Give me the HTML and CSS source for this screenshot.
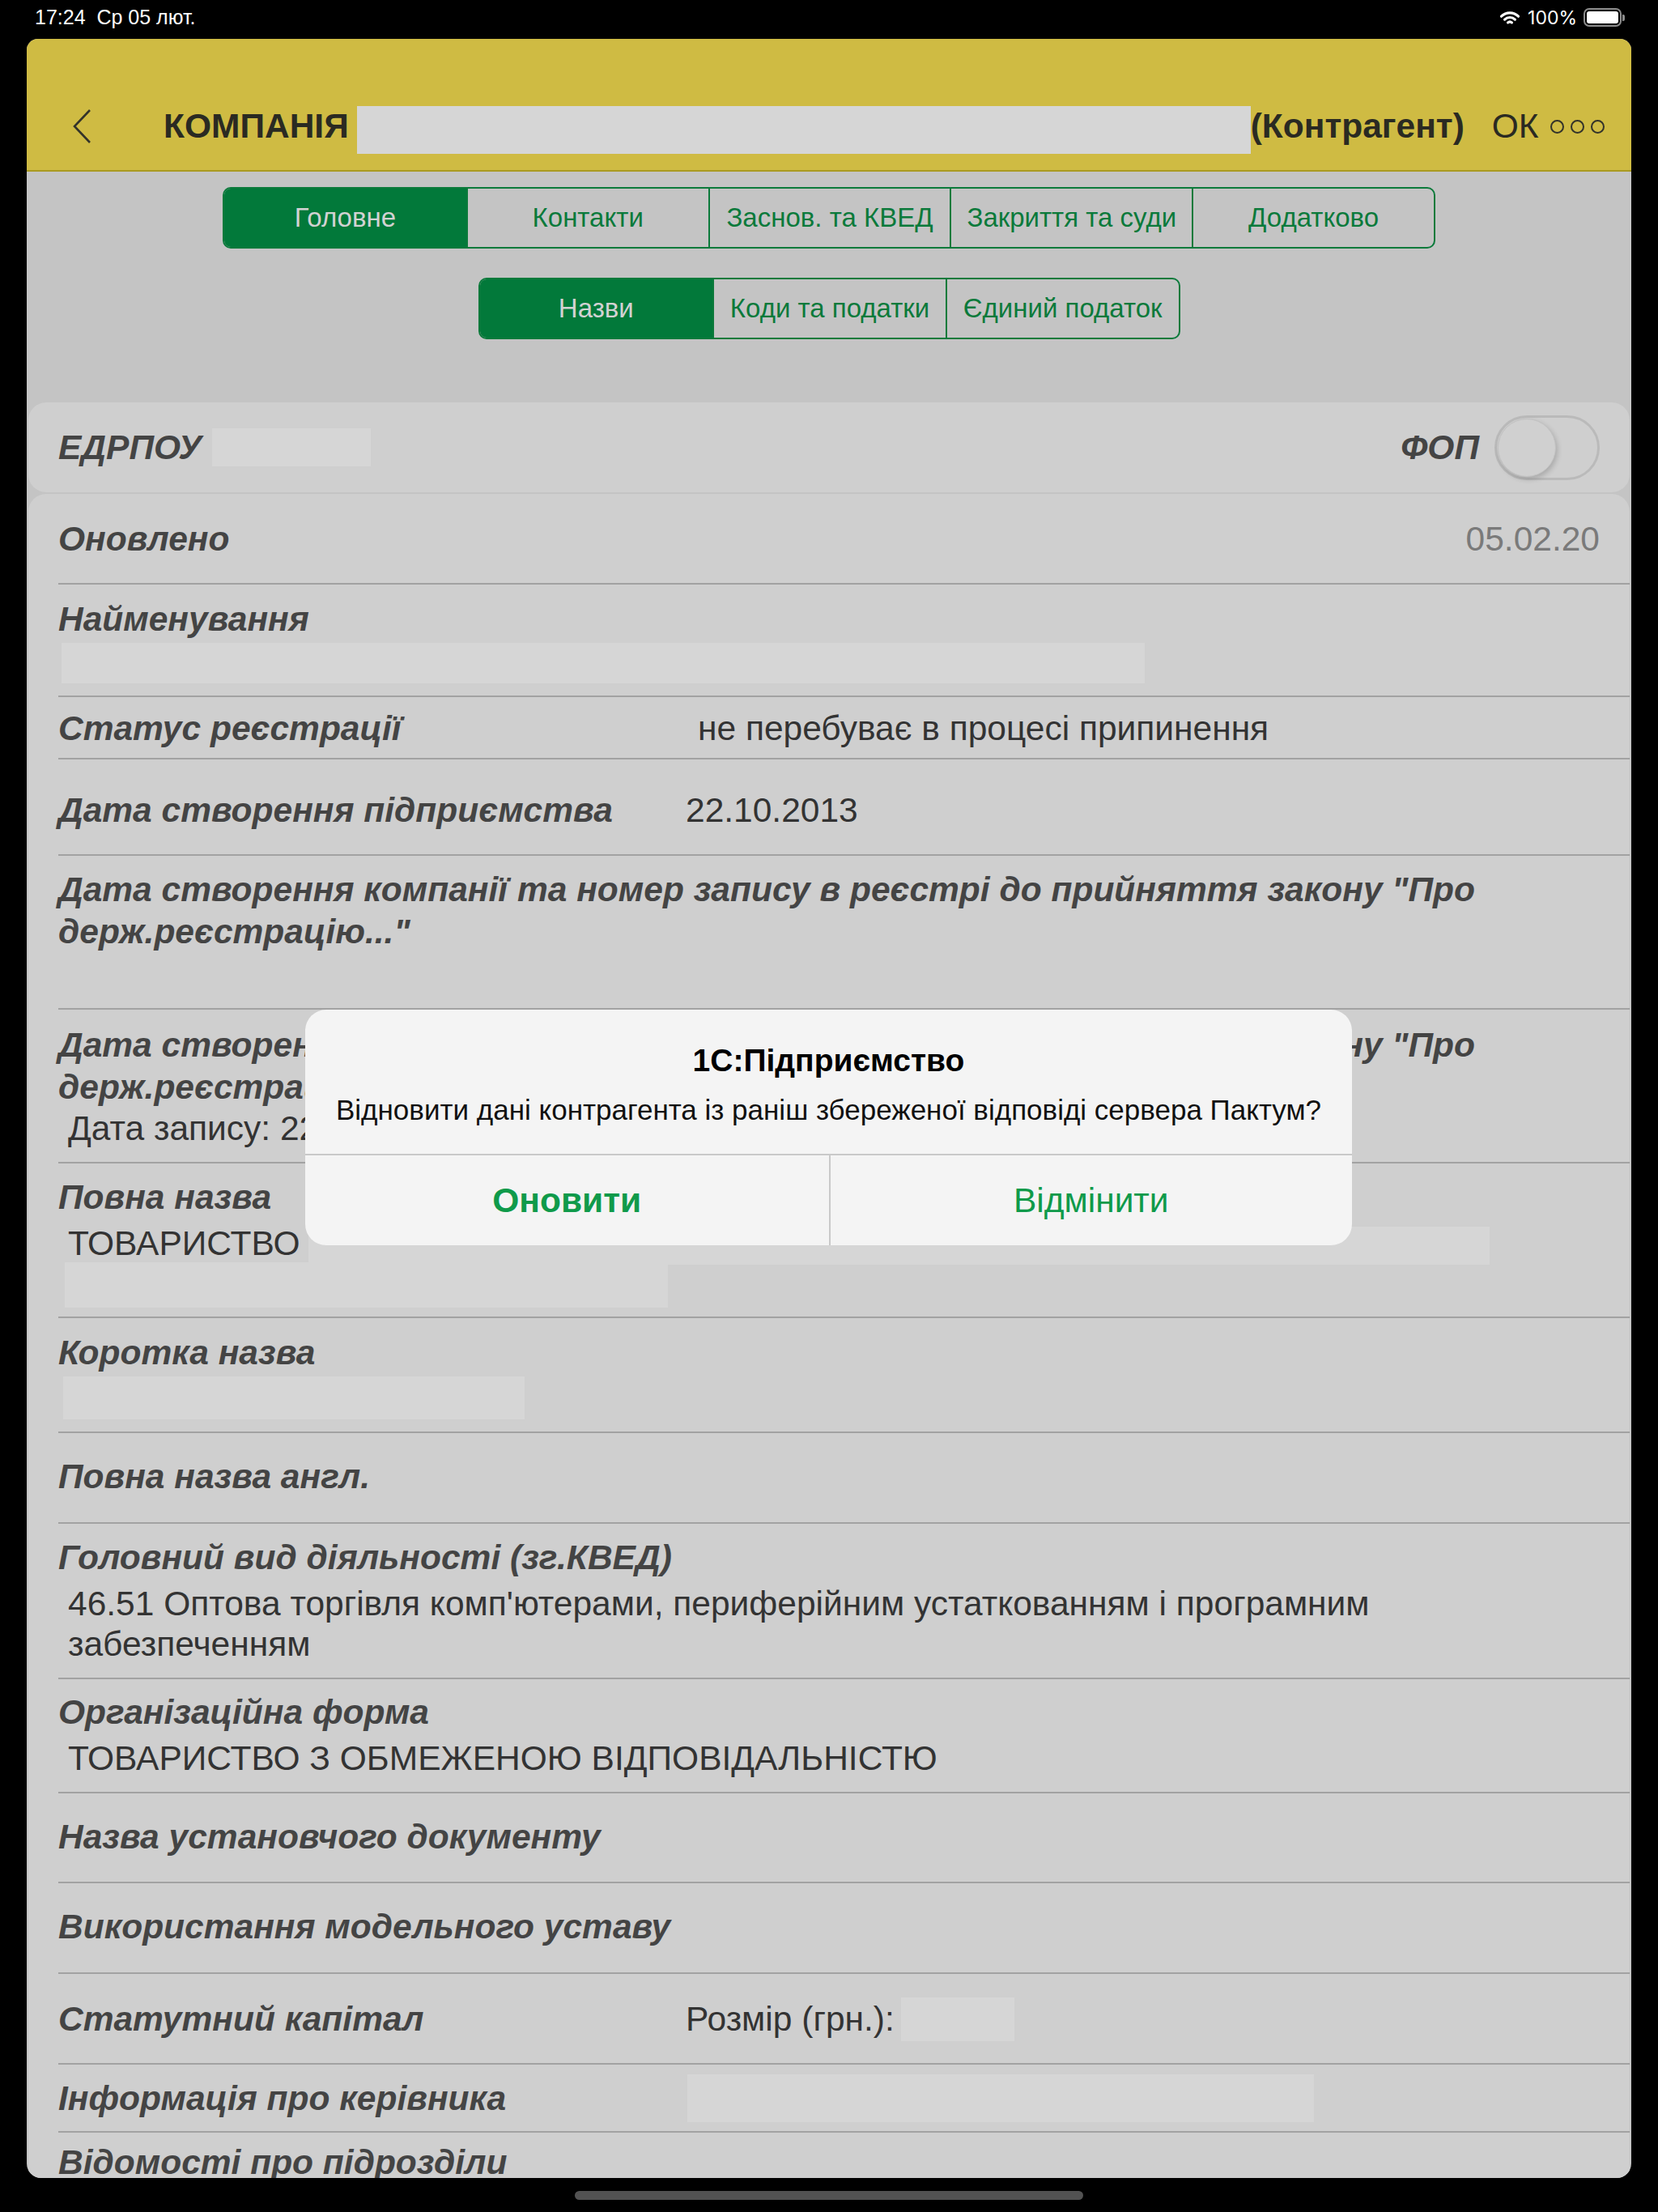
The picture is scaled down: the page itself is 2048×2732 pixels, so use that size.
FILE: index.html
```html
<!DOCTYPE html>
<html lang="uk">
<head>
  <meta charset="utf-8">
  <title>Компанія (Контрагент)</title>
  <link rel="stylesheet" href="styles.css">
</head>
<body>
  <div class="statusbar">
    <span class="clock">17:24&nbsp;&nbsp;Ср 05 лют.</span>
    <span class="sys">
      <svg class="wifi" viewBox="0 0 26 20">
        <path d="M2.5 8.2a15 15 0 0 1 21 0"/>
        <path d="M6.6 12.1a9.2 9.2 0 0 1 12.8 0"/>
        <path d="M10.6 15.9a3.6 3.6 0 0 1 4.8 0"/>
      </svg>
      <span>100%</span>
      <span class="battery"><span class="level"></span></span>
    </span>
  </div>

  <div class="sheet">
    <header class="navbar">
      <svg class="back" viewBox="0 0 24 44"><polyline points="22,2 3,22 22,42"/></svg>
      <h1 class="title">КОМПАНІЯ <span class="redact title-name"></span>(Контрагент)</h1>
      <span class="ok">ОК</span>
      <span class="more"><i></i><i></i><i></i></span>
    </header>

    <nav class="tabs">
      <div class="segments main">
        <span class="seg active">Головне</span>
        <span class="seg">Контакти</span>
        <span class="seg">Заснов. та КВЕД</span>
        <span class="seg">Закриття та суди</span>
        <span class="seg">Додатково</span>
      </div>
      <div class="segments sub">
        <span class="seg active">Назви</span>
        <span class="seg">Коди та податки</span>
        <span class="seg">Єдиний податок</span>
      </div>
    </nav>

    <section class="group head">
      <span class="lbl">ЕДРПОУ</span>
      <span class="redact code"></span>
      <span class="lbl fop">ФОП</span>
      <span class="switch"><span class="knob"></span></span>
    </section>

    <section class="group fields">
      <div class="row split r1">
        <span class="lbl">Оновлено</span>
        <span class="muted">05.02.20</span>
      </div>
      <div class="row r2">
        <div class="lbl">Найменування</div>
        <span class="redact name"></span>
      </div>
      <div class="row pair r3">
        <span class="lbl">Статус реєстрації</span>
        <span class="val status">не перебуває в процесі припинення</span>
      </div>
      <div class="row pair r4">
        <span class="lbl">Дата створення підприємства</span>
        <span class="val">22.10.2013</span>
      </div>
      <div class="row r5">
        <div class="lbl">Дата створення компанії та номер запису в реєстрі до прийняття закону "Про<br>держ.реєстрацію..."</div>
      </div>
      <div class="row r6">
        <div class="lbl">Дата створення компанії та номер запису в реєстрі до прийняття закону "Про<br>держ.реєстрацію..."</div>
        <div class="val block tight">Дата запису: 22.10.2013</div>
      </div>
      <div class="row r7">
        <div class="lbl">Повна назва</div>
        <div class="val block line">ТОВАРИСТВО<span class="redact full-a"></span></div>
        <span class="redact full-b"></span>
      </div>
      <div class="row r8">
        <div class="lbl">Коротка назва</div>
        <span class="redact short"></span>
      </div>
      <div class="row r9">
        <div class="lbl">Повна назва англ.</div>
      </div>
      <div class="row r10">
        <div class="lbl">Головний вид діяльності (зг.КВЕД)</div>
        <div class="val block">46.51 Оптова торгівля комп'ютерами, периферійним устаткованням і програмним<br>забезпеченням</div>
      </div>
      <div class="row r11">
        <div class="lbl">Організаційна форма</div>
        <div class="val block">ТОВАРИСТВО З ОБМЕЖЕНОЮ ВІДПОВІДАЛЬНІСТЮ</div>
      </div>
      <div class="row r12">
        <div class="lbl">Назва установчого документу</div>
      </div>
      <div class="row r13">
        <div class="lbl">Використання модельного уставу</div>
      </div>
      <div class="row pair r14">
        <span class="lbl">Статутний капітал</span>
        <span class="val">Розмір (грн.):</span>
        <span class="redact capital"></span>
      </div>
      <div class="row pair r15">
        <span class="lbl">Інформація про керівника</span>
        <span class="redact head-name"></span>
      </div>
      <div class="row r16">
        <div class="lbl">Відомості про підрозділи</div>
      </div>
    </section>
  </div>

  <div class="home-bar"></div>

  <div class="alert" role="alertdialog">
    <div class="alert-body">
      <h2>1С:Підприємство</h2>
      <p>Відновити дані контрагента із раніш збереженої відповіді сервера Пактум?</p>
    </div>
    <div class="alert-actions">
      <button class="primary" type="button">Оновити</button>
      <button type="button">Відмінити</button>
    </div>
  </div>
</body>
</html>
```

FILE: styles.css
```css
* {
  box-sizing: border-box;
}

body {
  margin: 0;
  width: 2048px;
  height: 2732px;
  position: relative;
  overflow: hidden;
  background: #000;
  font-family: "Liberation Sans", Arial, sans-serif;
}

/* top system bar */
.statusbar {
  height: 48px;
  display: flex;
  align-items: center;
  justify-content: space-between;
  padding: 0 45px 5px 43px;
  color: #fff;
  font-family: Inter, "Liberation Sans", sans-serif;
  font-size: 23px;
}

.clock {
  font-family: "Liberation Sans", sans-serif;
  font-size: 25px;
}

.sys {
  display: flex;
  align-items: center;
  gap: 9px;
}

.wifi {
  width: 26px;
  height: 20px;
  fill: none;
  stroke: #fff;
  stroke-width: 3.2;
  stroke-linecap: round;
}

.battery {
  position: relative;
  width: 47px;
  height: 23px;
  margin-left: -1px;
  border: 2px solid #8c8c8c;
  border-radius: 7px;
  padding: 2px;
}

.battery::after {
  content: "";
  position: absolute;
  right: -6px;
  top: 6px;
  width: 3px;
  height: 8px;
  border-radius: 0 2px 2px 0;
  background: #8c8c8c;
}

.battery .level {
  display: block;
  height: 100%;
  background: #fff;
  border-radius: 3px;
}

/* form sheet */
.sheet {
  margin: 0 33px;
  height: 2642px;
  background: #c4c4c4;
  border-radius: 14px 14px 18px 18px;
  overflow: hidden;
}

.navbar {
  height: 164px;
  display: flex;
  align-items: center;
  padding: 54px 31px 0 56px;
  background: #cfbb43;
  border-bottom: 2px solid #a99a22;
  color: #2a2a22;
  font-size: 42.5px;
}

.back {
  width: 24px;
  height: 44px;
  fill: none;
  stroke: #33332a;
  stroke-width: 2.6;
}

.title {
  margin: 0 0 0 89px;
  display: flex;
  align-items: center;
  font-size: 42.5px;
  font-weight: bold;
  white-space: nowrap;
}

.redact {
  display: block;
  background: #d6d6d6;
}

.title-name {
  width: 1104px;
  height: 59px;
  margin: 8px 0 0 10px;
}

.ok {
  margin-left: 34px;
}

.more {
  display: flex;
  gap: 8px;
  margin-left: 14px;
}

.more i {
  width: 17px;
  height: 17px;
  border: 2.5px solid #33332a;
  border-radius: 50%;
}

/* segmented tabs */
.tabs {
  display: flex;
  flex-direction: column;
  align-items: center;
  gap: 36px;
  padding: 19px 0 78px;
}

.segments {
  display: grid;
  grid-auto-flow: column;
  grid-auto-columns: 1fr;
  height: 76px;
  border: 2px solid #0b7a3b;
  border-radius: 10px;
  overflow: hidden;
  font-size: 33px;
  color: #0b7a3b;
}

.segments.main {
  width: 1498px;
}

.segments.sub {
  width: 867px;
}

.seg {
  display: flex;
  align-items: center;
  justify-content: center;
  white-space: nowrap;
  border-left: 2px solid #0b7a3b;
}

.seg:first-child {
  border-left: 0;
}

.seg.active {
  background: #02793a;
  color: #d2d2d2;
}

/* grouped form */
.group {
  margin: 0 2px;
  background: #cfcfcf;
  border-radius: 22px;
}

.group.head {
  height: 111px;
  margin-bottom: 2px;
  display: flex;
  align-items: center;
  padding: 0 37px;
}

.group.fields {
  border-radius: 22px 22px 0 0;
}

.lbl {
  font-size: 42.5px;
  line-height: 52px;
  font-weight: bold;
  font-style: italic;
  color: #444;
}

.code {
  width: 196px;
  height: 47px;
  margin-left: 13px;
}

.fop {
  margin-left: auto;
}

.switch {
  width: 130px;
  height: 80px;
  margin-left: 19px;
  border: 3px solid #bababa;
  border-radius: 40px;
  padding: 1px;
}

.knob {
  display: block;
  width: 72px;
  height: 72px;
  border-radius: 50%;
  background: #d0d0d0;
  border: 1px solid #c2c2c2;
  box-shadow: 2px 3px 6px rgba(0, 0, 0, 0.18);
}

.row {
  margin-left: 37px;
  padding-right: 37px;
  border-bottom: 2px solid #a2a2a2;
}

.row.split {
  display: flex;
  justify-content: space-between;
  align-items: center;
}

.row.pair {
  display: flex;
  align-items: center;
}

.row.pair > .lbl {
  width: 775px;
  flex: none;
}

.val {
  font-size: 42.5px;
  line-height: 52px;
  color: #333;
}

.val.status {
  margin-left: 15px;
}

.val.block {
  margin: 6px 0 0 12px;
  line-height: 50px;
}

.val.block.tight {
  margin-top: 0;
}

.val.line {
  display: flex;
  align-items: flex-end;
}

.muted {
  font-size: 42.5px;
  line-height: 52px;
  color: #7a7a7a;
}

.name {
  width: 1338px;
  height: 50px;
  margin: 3px 0 0 4px;
}

.full-a {
  width: 1459px;
  height: 47px;
  margin: 0 0 -1px 10px;
}

.full-b {
  width: 745px;
  height: 56px;
  margin: -2px 0 0 8px;
}

.short {
  width: 570px;
  height: 53px;
  margin: 3px 0 0 6px;
}

.capital {
  width: 140px;
  height: 54px;
  margin-left: 8px;
}

.head-name {
  width: 774px;
  height: 59px;
  margin-left: 2px;
}

.r1 { padding-top: 30px; padding-bottom: 28px; }
.r2 { padding-top: 17px; padding-bottom: 15px; }
.r3 { padding-top: 13px; padding-bottom: 10px; }
.r4 { padding-top: 37px; padding-bottom: 28px; }
.r5 { padding-top: 16px; padding-bottom: 68px; }
.r6 { padding-top: 18px; padding-bottom: 16px; }
.r7 { padding-top: 16px; padding-bottom: 11px; }
.r8 { padding-top: 17px; padding-bottom: 15px; }
.r9 { padding-top: 28px; padding-bottom: 30px; }
.r10 { padding-top: 16px; padding-bottom: 16px; }
.r11 { padding-top: 15px; padding-bottom: 16px; }
.r12 { padding-top: 28px; padding-bottom: 29px; }
.r13 { padding-top: 28px; padding-bottom: 30px; }
.r14 { padding-top: 29px; padding-bottom: 27px; }
.r15 { padding-top: 12px; padding-bottom: 11px; }
.r16 { padding-top: 11px; border-bottom: 0; }

.home-bar {
  width: 628px;
  height: 11px;
  margin: 16px auto 0;
  border-radius: 6px;
  background: #525252;
}

/* confirmation alert */
.alert {
  position: absolute;
  left: 377px;
  top: 1247px;
  width: 1293px;
  height: 291px;
  display: flex;
  flex-direction: column;
  background: #f4f4f4;
  border-radius: 26px;
  overflow: hidden;
}

.alert-body {
  height: 180px;
  padding: 40px 16px 0;
  text-align: center;
  border-bottom: 2px solid #c9c9c9;
}

.alert h2 {
  margin: 0;
  font-size: 39px;
  line-height: 46px;
  font-weight: bold;
  color: #000;
}

.alert p {
  margin: 17px 0 0;
  font-size: 35px;
  line-height: 42px;
  color: #111;
  white-space: nowrap;
}

.alert-actions {
  flex: 1;
  display: grid;
  grid-template-columns: 1fr 1fr;
}

.alert-actions button {
  margin: 0;
  padding: 0;
  border: 0;
  background: none;
  font-family: inherit;
  font-size: 42.5px;
  color: #0f9a4a;
}

.alert-actions button + button {
  border-left: 2px solid #c9c9c9;
}

.alert-actions .primary {
  font-weight: bold;
}
```
